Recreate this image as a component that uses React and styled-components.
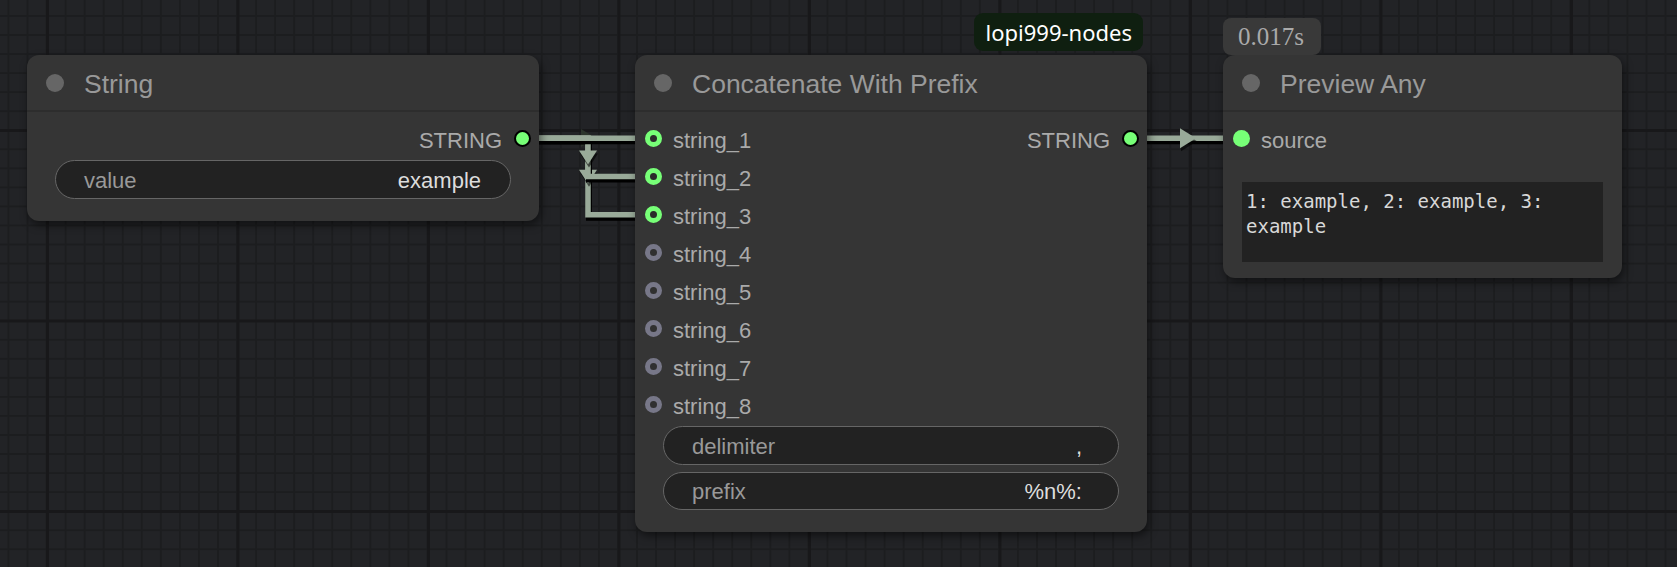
import React from 'react';
import styled, { createGlobalStyle } from 'styled-components';

const GlobalStyle = createGlobalStyle`
    html, body {
        margin: 0;
        padding: 0;
        background: #222326;
        overflow: hidden;
    }
`;

const Canvas = styled.div`
    position: relative;
    width: 1677px;
    height: 567px;
    overflow: hidden;
    background-color: #222326;
    background-image:
        linear-gradient(to right, #18181a 3px, transparent 3px),
        linear-gradient(to bottom, #18181a 3px, transparent 3px),
        linear-gradient(to right, #1c1d1f 2px, transparent 2px),
        linear-gradient(to bottom, #1c1d1f 2px, transparent 2px);
    background-size: 190.5px 190.5px, 190.5px 190.5px, 19.05px 19.05px, 19.05px 19.05px;
    background-position: 46px 0, 0 129px, 7.5px 0, 0 15px;
    font-family: "Liberation Sans", Arial, sans-serif;
`;

const LinkLayer = styled.svg`
    position: absolute;
    left: 0;
    top: 0;
    pointer-events: none;
`;

const Node = styled.div`
    position: absolute;
    left: ${p => p.$x}px;
    top: ${p => p.$y}px;
    width: ${p => p.$w}px;
    background: #353535;
    border-radius: 12px;
    box-shadow: 2px 4px 8px rgba(0, 0, 0, 0.5);
`;

const Header = styled.div`
    display: flex;
    align-items: center;
    gap: 20px;
    height: 55px;
    padding-left: 19px;
    border-bottom: 2px solid #2d2d2d;
    color: #999;
    font-size: 26.5px;
    white-space: nowrap;
`;

const TitleDot = styled.span`
    flex: none;
    width: 18px;
    height: 18px;
    border-radius: 50%;
    background: #666;
`;

const TitleText = styled.span`
    padding-top: 4px;
`;

const Body = styled.div`
    padding: 7px 0 ${p => p.$pb}px;
`;

const SlotRow = styled.div`
    display: flex;
    align-items: center;
    justify-content: space-between;
    height: 38px;
    font-size: 22px;
    color: #aaa;
`;

const SlotLabel = styled.span`
    padding-top: 5px;
`;

const InSlot = styled.div`
    display: flex;
    align-items: center;
    gap: 11px;
    padding-left: 10px;
`;

const OutSlot = styled.div`
    display: flex;
    align-items: center;
    gap: 12px;
    padding-right: 8px;
    margin-left: auto;
`;

const DOT_STYLES = {
    out: 'width: 17px; height: 17px; background: #7f7; border: 2px solid #000;',
    ring: 'width: 17px; height: 17px; background: #2b2b2b; border: 5px solid #7f7;',
    idle: 'width: 17px; height: 17px; background: #303030; border: 5px solid #778;',
    in: 'width: 17px; height: 17px; background: #7f7; border: none;'
};

const Dot = styled.span`
    flex: none;
    box-sizing: border-box;
    border-radius: 50%;
    ${p => DOT_STYLES[p.$kind]}
`;

const WidgetList = styled.div`
    display: flex;
    flex-direction: column;
    gap: 7px;
    margin: 3px 28px 0;
`;

const Widget = styled.div`
    display: flex;
    align-items: center;
    justify-content: space-between;
    box-sizing: border-box;
    height: 38.5px;
    padding: 3px ${p => p.$pr}px 0 28px;
    background: #222;
    border: 1.5px solid #666;
    border-radius: 20px;
    font-size: 22px;
`;

const WidgetLabel = styled.span`
    color: #999;
`;

const WidgetValue = styled.span`
    color: #ddd;
`;

const Preview = styled.div`
    box-sizing: border-box;
    height: 80px;
    margin: 25px 19px 0;
    padding: 7px 4px;
    background: #222;
    color: #d8d8d8;
    font-family: "DejaVu Sans Mono", "Liberation Mono", monospace;
    font-size: 19px;
    line-height: 25px;
`;

const SourceBadge = styled.div`
    position: absolute;
    right: 4px;
    top: -42px;
    height: 37.5px;
    display: flex;
    align-items: center;
    padding: 0 11px 0 12px;
    border-radius: 9px;
    background: #0f1f10;
    color: #fff;
    font-family: "Noto Sans", "Open Sans", sans-serif;
    font-size: 22px;
`;

const TimeBadge = styled.div`
    position: absolute;
    left: 0;
    top: -37.5px;
    height: 37.5px;
    display: flex;
    align-items: center;
    padding: 2px 17px 0 15px;
    box-sizing: border-box;
    border-radius: 8px;
    background: #393939;
    color: #aaa;
    font-family: "Liberation Serif", "Times New Roman", serif;
    font-size: 25px;
`;

const LINK_COLOR = '#9a9';

const LINKS = [
    { d: 'M522 138.3 H588 V214.7 H660', arrow: { x: 588, y: 176.8, dir: 'down' } },
    { d: 'M522 138.3 H588 V176.5 H660', arrow: { x: 588, y: 157.6, dir: 'down' } },
    { d: 'M522 138.3 H660', arrow: null },
    { d: 'M1130 138.3 H1245', arrow: { x: 1188, y: 138.3, dir: 'right' } }
];

const arrowPoints = ({ x, y, dir }) => (
    dir === 'down'
        ? `${x - 9},${y - 7} ${x + 9},${y - 7} ${x},${y + 7}`
        : `${x - 8},${y - 10} ${x - 8},${y + 10} ${x + 8},${y}`
);

function Links() {
    return (
        <LinkLayer width="1677" height="567">
            <polygon points="581,129 581,147 596,138" fill="#2c352c" />
            { LINKS.map((link, i) => (
                <g key={ i }>
                    <path d={ link.d } transform="translate(1 3)" fill="none" stroke="#000" strokeWidth="6" />
                    <path d={ link.d } fill="none" stroke={ LINK_COLOR } strokeWidth="5.5" />
                    { link.arrow && (
                        <g>
                            <polygon points={ arrowPoints(link.arrow) } transform="translate(1 3)" fill="#000" opacity="0.6" />
                            <polygon points={ arrowPoints(link.arrow) } fill={ LINK_COLOR } />
                        </g>
                    ) }
                </g>
            )) }
        </LinkLayer>
    );
}

const CONCAT_INPUTS = [1, 2, 3, 4, 5, 6, 7, 8].map(n => ({
    name: `string_${n}`,
    kind: n <= 3 ? 'ring' : 'idle'
}));

export default function App() {
    return (
        <Canvas>
            <GlobalStyle />
            <Links />

            <Node $x={ 27 } $y={ 55 } $w={ 512 }>
                <Header><TitleDot /><TitleText>String</TitleText></Header>
                <Body $pb={ 22.5 }>
                    <SlotRow>
                        <OutSlot><SlotLabel>STRING</SlotLabel><Dot $kind="out" /></OutSlot>
                    </SlotRow>
                    <WidgetList>
                        <Widget $pr={ 29 }>
                            <WidgetLabel>value</WidgetLabel>
                            <WidgetValue>example</WidgetValue>
                        </Widget>
                    </WidgetList>
                </Body>
            </Node>

            <Node $x={ 635 } $y={ 55 } $w={ 512 }>
                <SourceBadge>lopi999-nodes</SourceBadge>
                <Header><TitleDot /><TitleText>Concatenate With Prefix</TitleText></Header>
                <Body $pb={ 22 }>
                    { CONCAT_INPUTS.map((slot, i) => (
                        <SlotRow key={ slot.name }>
                            <InSlot><Dot $kind={ slot.kind } /><SlotLabel>{ slot.name }</SlotLabel></InSlot>
                            { i === 0 && <OutSlot><SlotLabel>STRING</SlotLabel><Dot $kind="out" /></OutSlot> }
                        </SlotRow>
                    )) }
                    <WidgetList>
                        <Widget $pr={ 36 }>
                            <WidgetLabel>delimiter</WidgetLabel>
                            <WidgetValue>,</WidgetValue>
                        </Widget>
                        <Widget $pr={ 36 }>
                            <WidgetLabel>prefix</WidgetLabel>
                            <WidgetValue>%n%:</WidgetValue>
                        </Widget>
                    </WidgetList>
                </Body>
            </Node>

            <Node $x={ 1223 } $y={ 55 } $w={ 399 }>
                <TimeBadge>0.017s</TimeBadge>
                <Header><TitleDot /><TitleText>Preview Any</TitleText></Header>
                <Body $pb={ 16 }>
                    <SlotRow>
                        <InSlot><Dot $kind="in" /><SlotLabel>source</SlotLabel></InSlot>
                    </SlotRow>
                    <Preview>1: example, 2: example, 3: example</Preview>
                </Body>
            </Node>
        </Canvas>
    );
}
